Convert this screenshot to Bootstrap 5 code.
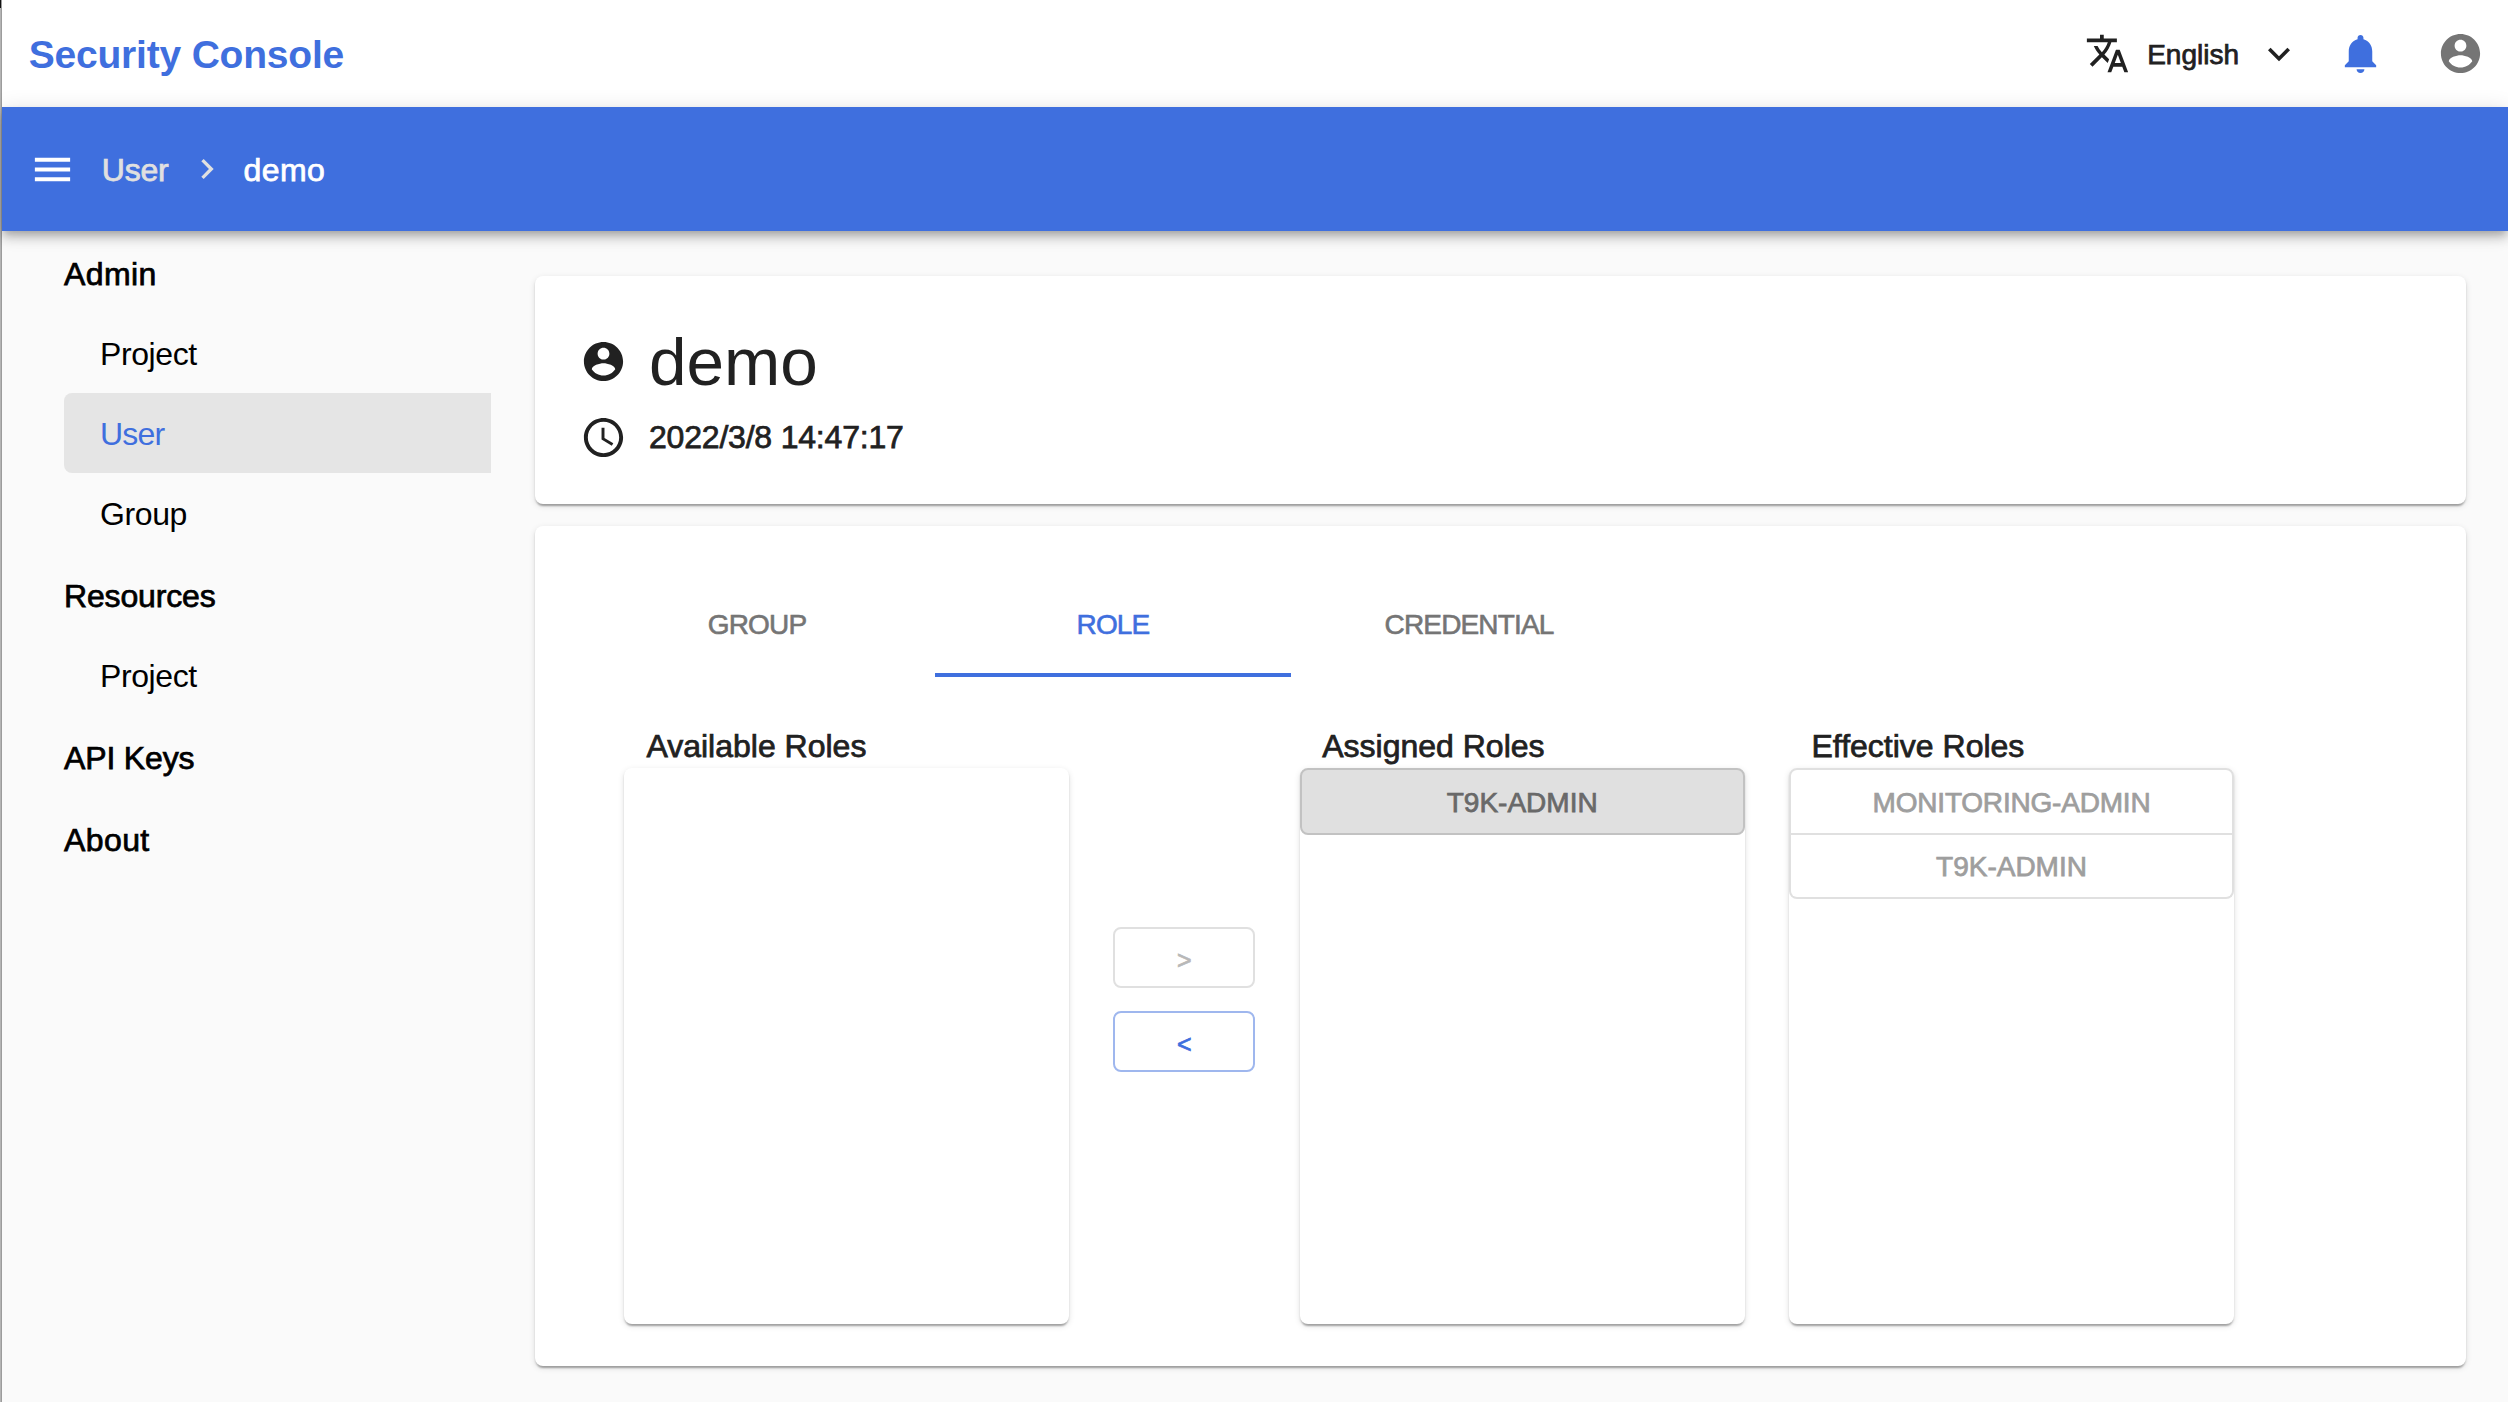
<!DOCTYPE html>
<html lang="en">
<head>
<meta charset="utf-8">
<meta name="viewport" content="width=device-width, initial-scale=1">
<title>Security Console</title>
<link href="https://cdn.jsdelivr.net/npm/bootstrap@5.3.0/dist/css/bootstrap.min.css" rel="stylesheet">
<style>
  :root { --brand: #3f6fde; --ink: #212121; }
  body {
    font-family: "Liberation Sans", Arial, sans-serif;
    font-size: 32px; line-height: 1.25; color: var(--ink); background: #fafafa;
    min-height: 1402px; overflow: hidden;
  }
  svg { fill: currentColor; flex: none; display: block; }
  .ico { width: 47px; height: 47px; }
  .ico-bell { color: var(--brand); margin: 0 53px 0 36px; }
  .ico-account { color: #757575; }
  .ico-sep { color: #e0e0e0; margin: 0 17px 0 18px; }
  /* weight between regular and bold */
  .medium { -webkit-text-stroke: .75px currentColor; }
  .window-edge { width: 2px; flex: none; background: linear-gradient(#111 8px, #b4b4b4 8px); border-right: 1px solid #9c9c9c; }

  .topbar { height: 107px; padding: 0 24px 0 26.7px; }
  .brand-title { font-size: 39px; letter-spacing: -.2px; color: var(--brand); padding-top: 4px; }
  .lang { font-size: 28px; letter-spacing: 0; margin: 2px 18px 0 17px; }

  .crumbbar {
    height: 124px; padding: 0 28.5px 0 26.8px; background: var(--brand); color: #fff; z-index: 2;
    box-shadow: 0 4px 8px -2px rgba(0,0,0,.2), 0 8px 10px rgba(0,0,0,.14), 0 2px 20px rgba(0,0,0,.12);
  }
  .crumbbar span { padding-top: 2px; }
  .crumb-parent { color: #e0e0e0; letter-spacing: -.2px; margin-left: 26px; }
  .crumb-here { letter-spacing: .4px; }

  .side { width: 489px; padding-left: 62px; }
  .side a { display: flex; align-items: center; height: 80px; color: #000; text-decoration: none; padding: 2px 0 0 36px; letter-spacing: -.4px; }
  .side a.head { height: 82px; padding: 3px 0 0 0; letter-spacing: .4px; }
  .side a.head.wide { letter-spacing: -.15px; }
  .side a.current { background: #e5e5e5; color: var(--brand); border-radius: 8px 0 0 8px; letter-spacing: -.8px; }

  .content-area { margin-left: 44px; width: 1931px; padding-top: 45px; }
  .paper {
    background: #fff; border-radius: 8px;
    box-shadow: 0 4px 2px -2px rgba(0,0,0,.2), 0 2px 2px rgba(0,0,0,.14), 0 2px 6px rgba(0,0,0,.12);
  }
  .summary { height: 228px; padding: 44px 45px; margin-bottom: 22px; }
  .summary span { margin-left: 22px; }
  .name-row { height: 82px; font-size: 67.5px; line-height: 82px; }
  .name-row span { padding-top: 2px; }
  .time-row { height: 70px; letter-spacing: -.2px; }

  .detail { height: 840px; padding: 47px 44px 42px; }
  .tabs-row { margin-bottom: 47px; }
  .tabs-row button {
    width: 356px; height: 104px; border: 0; border-bottom: 4px solid transparent; background: none; padding: 3px 0 0;
    font-size: 28px; color: #757575; letter-spacing: -.85px; -webkit-text-stroke: .6px currentColor;
  }
  .tabs-row button.active { color: var(--brand); border-color: var(--brand); }
  .transfer { gap: 44.5px; padding-left: 45px; }
  .role-col { width: 444.8px; }
  .role-col h2 { font-size: 32px; line-height: 44px; font-weight: 400; margin: 0; padding-left: 22.4px; letter-spacing: 0; }
  .role-box { height: 556px; }
  .role-item {
    display: block; width: 100%; height: 67px; padding: 2px 0 0; font-size: 28px; background: transparent;
    border: 2px solid #e0e0e0; color: #9e9e9e; border-radius: 8px; letter-spacing: -.2px;
  }
  .role-item.picked { background: #e0e0e0; border-color: #c2c2c2; color: #696969; letter-spacing: 0; }
  .role-item.first { border-radius: 8px 8px 0 0; }
  .role-item.last { border-radius: 0 0 8px 8px; border-top: 0; height: 64px; padding: 1px 0 0; letter-spacing: 0; }
  .movers { width: 142px; padding-top: 203px; gap: 23px; }
  .movers button { height: 61px; border: 2px solid #9fb7ee; border-radius: 8px; background: #fff; color: var(--brand); font-size: 25px; padding: 5px 0 0; line-height: 1; }
  .movers button:disabled { border-color: #e0e0e0; color: #b8b8b8; }
</style>
<script src="https://cdn.jsdelivr.net/npm/bootstrap@5.3.0/dist/js/bootstrap.bundle.min.js"></script>
</head>
<body class="d-flex">
<div class="window-edge"></div>
<div class="flex-grow-1 d-flex flex-column">
  <header class="topbar d-flex align-items-center bg-white">
    <span class="brand-title fw-bold me-auto">Security Console</span>
    <svg width="45" height="45" viewBox="0 0 24 24"><path d="M12.87 15.07l-2.54-2.51.03-.03c1.74-1.94 2.98-4.17 3.71-6.53H17V4h-7V2H8v2H1v1.99h11.17C11.5 7.92 10.44 9.75 9 11.35 8.07 10.32 7.3 9.19 6.69 8h-2c.73 1.63 1.73 3.17 2.98 4.56l-5.09 5.02L4 19l5-5 3.11 3.11.76-2.04zM18.5 10h-2L12 22h2l1.12-3h4.75L21 22h2l-4.5-12zm-2.62 7l1.62-4.33L19.12 17h-3.24z"/></svg>
    <span class="lang medium">English</span>
    <svg width="44" height="44" viewBox="0 0 24 24"><path d="M7.41 8.59L12 13.17l4.59-4.58L18 10l-6 6-6-6z"/></svg>
    <svg class="ico ico-bell" viewBox="0 0 24 24"><path d="M12 22c1.1 0 2-.9 2-2h-4c0 1.1.89 2 2 2zm6-6v-5c0-3.07-1.64-5.64-4.5-6.32V4c0-.83-.67-1.5-1.5-1.5s-1.5.67-1.5 1.5v.68C7.63 5.36 6 7.92 6 11v5l-2 2v1h16v-1l-2-2z"/></svg>
    <svg class="ico ico-account" viewBox="0 0 24 24"><path d="M12 2C6.48 2 2 6.48 2 12s4.48 10 10 10 10-4.48 10-10S17.52 2 12 2zm0 3c1.66 0 3 1.34 3 3s-1.34 3-3 3-3-1.34-3-3 1.34-3 3-3zm0 14.2c-2.5 0-4.71-1.28-6-3.22.03-1.99 4-3.08 6-3.08 1.99 0 5.97 1.09 6 3.08-1.29 1.94-3.5 3.22-6 3.22z"/></svg>
  </header>

  <nav class="crumbbar d-flex align-items-center position-relative">
    <svg class="ico" viewBox="0 0 24 24"><path d="M3 18h18v-2H3v2zm0-5h18v-2H3v2zm0-7v2h18V6H3z"/></svg>
    <span class="crumb-parent medium">User</span>
    <svg class="ico-sep" width="40" height="40" viewBox="0 0 24 24"><path d="M10 6L8.59 7.41 13.17 12l-4.58 4.59L10 18l6-6z"/></svg>
    <span class="crumb-here medium">demo</span>
  </nav>

  <div class="d-flex">
    <aside class="side">
      <a class="head medium" href="#">Admin</a>
      <a href="#">Project</a>
      <a class="current" href="#">User</a>
      <a href="#">Group</a>
      <a class="head wide medium" href="#">Resources</a>
      <a href="#">Project</a>
      <a class="head wide medium" href="#">API Keys</a>
      <a class="head medium" href="#">About</a>
    </aside>

    <main class="content-area">
      <section class="paper summary">
        <div class="name-row d-flex align-items-center">
          <svg class="ico" viewBox="0 0 24 24"><path d="M12 2C6.48 2 2 6.48 2 12s4.48 10 10 10 10-4.48 10-10S17.52 2 12 2zm0 3c1.66 0 3 1.34 3 3s-1.34 3-3 3-3-1.34-3-3 1.34-3 3-3zm0 14.2c-2.5 0-4.71-1.28-6-3.22.03-1.99 4-3.08 6-3.08 1.99 0 5.97 1.09 6 3.08-1.29 1.94-3.5 3.22-6 3.22z"/></svg>
          <span>demo</span>
        </div>
        <div class="time-row d-flex align-items-center">
          <svg class="ico" viewBox="0 0 24 24"><path d="M11.99 2C6.47 2 2 6.48 2 12s4.47 10 9.99 10C17.52 22 22 17.52 22 12S17.52 2 11.99 2zM12 20c-4.42 0-8-3.58-8-8s3.58-8 8-8 8 3.58 8 8-3.58 8-8 8z"/><path d="M12.5 7H11v6l5.25 3.15.75-1.23-4.5-2.67z"/></svg>
          <span class="medium">2022/3/8 14:47:17</span>
        </div>
      </section>

      <section class="paper detail">
        <div class="tabs-row d-flex">
          <button>GROUP</button>
          <button class="active">ROLE</button>
          <button>CREDENTIAL</button>
        </div>
        <div class="transfer d-flex">
          <div class="role-col">
            <h2 class="medium">Available Roles</h2>
            <div class="paper role-box"></div>
          </div>
          <div class="movers d-flex flex-column">
            <button class="medium" disabled>&gt;</button>
            <button class="medium">&lt;</button>
          </div>
          <div class="role-col">
            <h2 class="medium">Assigned Roles</h2>
            <div class="paper role-box">
              <button class="role-item picked medium">T9K-ADMIN</button>
            </div>
          </div>
          <div class="role-col">
            <h2 class="medium">Effective Roles</h2>
            <div class="paper role-box">
              <button class="role-item first medium">MONITORING-ADMIN</button>
              <button class="role-item last medium">T9K-ADMIN</button>
            </div>
          </div>
        </div>
      </section>
    </main>
  </div>
</div>
</body>
</html>
